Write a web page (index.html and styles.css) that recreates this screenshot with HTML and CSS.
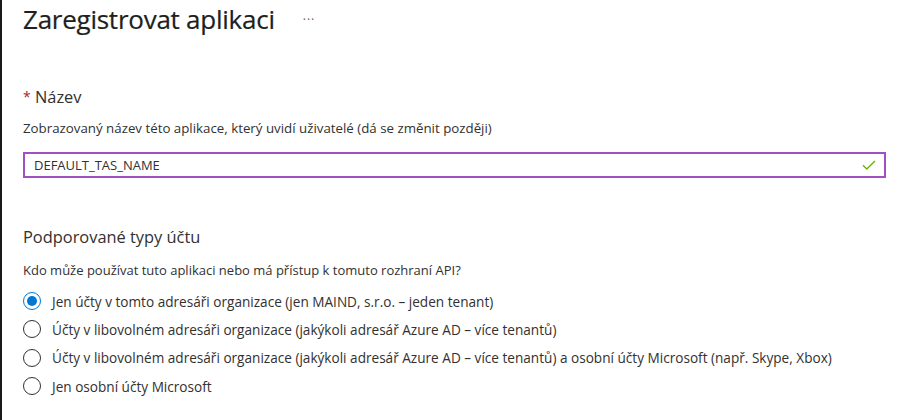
FILE: index.html
```html
<!DOCTYPE html>
<html>
<head lang="cs">
    <meta charset="UTF-8">
    <title>Zaregistrovat aplikaci</title>
    <link rel="stylesheet" href="styles.css">
</head>
<body>
<div id="page">
    <div class="header">
        <h1>Zaregistrovat aplikaci</h1>
        <span class="more">&middot;&middot;&middot;</span>
    </div>

    <div class="section">
        <h2><span class="req">*</span> Název</h2>
        <p class="desc">Zobrazovaný název této aplikace, který uvidí uživatelé (dá se změnit později)</p>
        <div class="field">
            <span class="value">DEFAULT_TAS_NAME</span>
            <svg class="check" width="14" height="10" viewBox="0 0 14 10">
                <path d="M1 5.2 L4.8 9 L13 1" fill="none" stroke="#6bb700" stroke-width="1.4"/>
            </svg>
        </div>
    </div>

    <div class="section types">
        <h2>Podporované typy účtu</h2>
        <p class="desc">Kdo může používat tuto aplikaci nebo má přístup k tomuto rozhraní API?</p>
        <ul class="radios">
            <li class="checked"><span class="dot"></span>Jen účty v tomto adresáři organizace (jen MAIND, s.r.o. – jeden tenant)</li>
            <li><span class="dot"></span>Účty v libovolném adresáři organizace (jakýkoli adresář Azure AD – více tenantů)</li>
            <li><span class="dot"></span>Účty v libovolném adresáři organizace (jakýkoli adresář Azure AD – více tenantů) a osobní účty Microsoft (např. Skype, Xbox)</li>
            <li><span class="dot"></span>Jen osobní účty Microsoft</li>
        </ul>
    </div>
</div>
</body>
</html>
```

FILE: styles.css
```css
*{
    margin: 0;
    padding: 0;
}
html, body{
    height: 100%;
}
body{
    background: #fff;
    color: #323130;
    font-family: "Open Sans", "Noto Sans", sans-serif;
}
ul{
    list-style: none;
}
#page{
    height: 100%;
    border-left: 2px solid #1b1a19;
    padding: 0 22px 0 21px;
    box-sizing: border-box;
}
.header{
    display: flex;
    align-items: center;
    height: 38px;
}
.header h1{
    font-size: 26px;
    font-weight: 400;
    color: #201f1e;
    letter-spacing: -0.25px;
    -webkit-text-stroke: 0.2px #201f1e;
}
.more{
    margin-left: 28px;
    font-size: 12px;
    color: #605e5c;
    letter-spacing: 1px;
}
.section{
    margin-top: 47px;
}
.section h2{
    font-size: 16.4px;
    font-weight: 400;
    line-height: 24px;
}
.req{
    color: #a4262c;
    font-size: 14px;
    vertical-align: top;
}
.desc{
    font-size: 13.3px;
    line-height: 18px;
    margin-top: 10px;
}
.field{
    display: flex;
    align-items: center;
    justify-content: space-between;
    height: 26px;
    margin-top: 15px;
    padding: 0 8px 0 9px;
    border: 2px solid #a050c0;
    box-sizing: border-box;
    font-size: 13px;
}
.types{
    margin-top: 47px;
}
.types .desc{
    font-size: 13px;
    margin-top: 12px;
}
.radios{
    margin-top: 8px;
}
.radios li{
    display: flex;
    align-items: center;
    height: 28.3px;
    font-size: 13.6px;
}
.dot{
    width: 18px;
    height: 18px;
    border: 1px solid #323130;
    border-radius: 50%;
    box-sizing: border-box;
    margin-right: 11px;
    position: relative;
}
.checked .dot{
    border-color: #0078d4;
}
.checked .dot::after{
    content: "";
    position: absolute;
    left: 3px;
    top: 3px;
    width: 10px;
    height: 10px;
    border-radius: 50%;
    background: #0078d4;
}
```
